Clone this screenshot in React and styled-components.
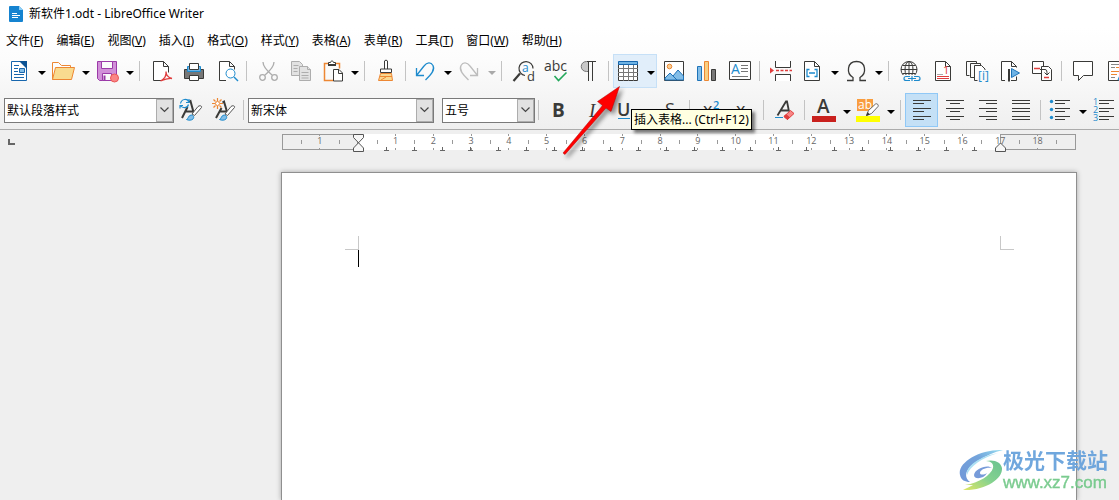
import React from "react";
import styled, { createGlobalStyle, css } from "styled-components";

const INK = "#3a3a38";
const BLUE = "#1e8bcd";
const ORANGE = "#ed8733";
const RED = "#e03e3e";
const GREY = "#adadad";

const GlobalStyle = createGlobalStyle`
  * {
    box-sizing: border-box;
  }
  body {
    margin: 0;
    background: #efefef;
    color: #000;
    font-family: "Noto Sans", "Noto Sans CJK SC", sans-serif;
    font-size: 12px;
  }
`;

/* ---------- icons, all on a 24px grid ---------- */

const Glyph = ({ x, y, size, color = INK, children, ...rest }) => (
  <text
    x={x}
    y={y}
    fontSize={size}
    fill={color}
    stroke="none"
    fontFamily="Open Sans, sans-serif"
    {...rest}
  >
    {children}
  </text>
);

const Brush = () => (
  <>
    <path d="M22.5 9.5l-7 8-2.5-1.5 6-7.5c1.500-1.500 4.500-.5 3.500 1z" fill="#fff" stroke="#555" />
    <path d="M7.500 21.500c2-.5 1.500-4 4.500-4.500 2.500 0 3.500 2.500 2 4-1.500 1.500-4.500 1.500-6.500.5z" fill="#83bee8" stroke={BLUE} />
  </>
);

const lines = (rows, x1, x2) => rows.map((y) => <path key={y} d={`M${x1} ${y}H${x2}`} />);

const ICONS = {
  newDoc: (
    <g stroke="#1766ad">
      <path d="M4.500 2.500h10l5 5v14h-15z" fill="#fff" />
      <path d="M12 2h8v8z" fill="#0b5394" stroke="none" />
      <path d="M7 6.500h5M7 9.500h4M7 12.500h4M7 15.500h10M7 18.500h10" />
      <path d="M12.500 9.500h5v4h-5z" fill="#83bee8" />
    </g>
  ),
  open: (
    <g stroke={ORANGE}>
      <path d="M1.500 20.500v-17h6l3 3h9v3" fill="#fdfdfd" />
      <path d="M4.500 8.500h19l-3 12h-19z" fill="#f9db8f" />
    </g>
  ),
  save: (
    <g stroke="#9b3aa8">
      <path d="M2.500 2.500h19v19h-17l-2-2z" fill="#d190d8" />
      <path d="M6.500 2.500h11v7h-11z" fill="#fafafa" />
      <path d="M7.500 21.500v-7h9v7z" fill="#fafafa" />
      <path d="M9.500 16.500v5" strokeWidth="2" />
      <circle cx="19.500" cy="19" r="4" fill="#fa8585" stroke="#ea5757" />
    </g>
  ),
  pdf: (
    <>
      <path d="M12 21.500h-7.500v-19h10l5 5v6M14.500 2.500v5h5" fill="#fff" />
      <path d="M11.500 22c4-2 6-5.500 5.500-9.500 0 3.500 2 6 6 7-4-.5-7 .5-11.500 2.500z" stroke={RED} strokeWidth="1.300" />
    </>
  ),
  print: (
    <>
      <path d="M2.500 10.500h19v9h-19z" fill="#777" />
      <path d="M5.500 7.500h13v5h-13z" fill="#6fb3e4" stroke={BLUE} />
      <path d="M7.500 10.500v-6h9v6z" fill="#fff" />
      <path d="M7.500 16.500h9v5h-9z" fill="#fff" />
    </>
  ),
  preview: (
    <>
      <path d="M11 21.500h-6.500v-19h10l5 5v3M14.500 2.500v5h5" fill="#fff" />
      <circle cx="15.500" cy="14.500" r="4.500" stroke={BLUE} fill="#fff" />
      <path d="M19 18l4 4" stroke={BLUE} strokeWidth="1.400" />
    </>
  ),
  cut: (
    <g stroke={GREY} strokeWidth="1.300">
      <path d="M7 3c0 4 2 7 9 13M18 3c0 4-2 7-9 13" />
      <circle cx="6.500" cy="18.500" r="2.800" />
      <circle cx="18.500" cy="18.500" r="2.800" />
    </g>
  ),
  copy: (
    <g stroke={GREY} fill="#e2e2e2">
      <path d="M2.500 2.500h8l3 3v11h-11z" />
      <path d="M10.500 7.500h8l3 3v11h-11z" />
      <path d="M18.500 7.500v3h3M4.500 6.500h5M4.500 9.500h4M4.500 12.500h4M12.500 13.500h7M12.500 16.500h7M12.500 19h7" />
    </g>
  ),
  paste: (
    <>
      <path d="M8 4.500h-3.500v17h9M16 4.500h3.500v5" stroke={ORANGE} strokeWidth="1.500" />
      <path d="M8.500 6.500v-3h2c0-2 3-2 3 0h2v3z" fill="#fff" />
      <path d="M8 6h8" strokeWidth="2" />
      <path d="M13.500 10.500h5.500l3.500 3.500v8h-9zM18.500 10.500v4h4" fill="#fff" />
    </>
  ),
  clone: (
    <>
      <path d="M10.500 10v-8c0-1 3-1 3 0v8M6.500 13.500v-3.500h11v3.500z" fill="#fff" />
      <path d="M6.500 14.500h11l1 7h-14z" fill="#fad890" stroke={ORANGE} />
      <path d="M6 17.500h12M7 21l5-3" stroke={ORANGE} />
    </>
  ),
  undo: <path d="M3.500 9v7.500h7.500M3.500 16.500l7.500-9.500c3-4 7-4 9-.5 2 4-.5 8-7.500 14.500" stroke={BLUE} strokeWidth="1.300" />,
  redo: <path d="M20.500 9v7.500h-7.500M20.500 16.500l-7.500-9.500c-3-4-7-4-9-.5-2 4 .5 8 7.500 14.500" stroke="#bdbdbd" strokeWidth="1.300" />,
  find: (
    <>
      <path d="M14 16.500a7 7 0 1 1 8-7" strokeWidth="1.200" />
      <path d="M9 14.500l-6.500 7.500" strokeWidth="2.200" />
      <Glyph x="11" y="13" size="12" color={BLUE}>a</Glyph>
      <Glyph x="16" y="22" size="13">d</Glyph>
    </>
  ),
  spelling: (
    <>
      <Glyph x="0" y="12" size="14">abc</Glyph>
      <path d="M10.500 17l4 4.500 8-8" stroke="#23a85b" strokeWidth="1.600" />
    </>
  ),
  pilcrow: (
    <>
      <path d="M11.500 2.500h-2c-7 0-7 10 0 10h2z" fill="#c9c9c9" stroke="#777" />
      <path d="M19 2.500h-9M11.500 2.500v19.500M15.500 2.500v19.500" />
    </>
  ),
  table: (
    <>
      <path d="M2.500 5.500h19v16h-19z" fill="#fff" />
      <path d="M2 9.500h20M2 13.500h20M2 17.500h20M7.500 6v16M12.500 6v16M17.500 6v16" stroke="#777" />
      <path d="M2.500 2.500h19v3h-19z" fill="#6fb3e4" stroke="#1766ad" />
    </>
  ),
  image: (
    <>
      <path d="M2.500 2.500h19v19h-19z" fill="#fff" />
      <circle cx="7.500" cy="7.500" r="2.300" fill="#f9cf93" stroke={ORANGE} />
      <path d="M3 21v-2l5-5 3 3 5-6 5.500 6v4z" fill="#83bee8" stroke="#1e73b8" />
      <path d="M11 17l4 4" stroke="#1e73b8" />
    </>
  ),
  chart: (
    <>
      <path d="M2.500 7.500h4v14h-4z" fill="#83bee8" stroke="#1e73b8" />
      <path d="M9.500 2.500h4v19h-4z" fill="#f9cf83" stroke={ORANGE} />
      <path d="M16.500 10.500h4v11h-4z" fill="#787878" />
    </>
  ),
  textBox: (
    <>
      <path d="M1.500 2.500h21v18h-21z" fill="#fff" />
      <path d="M13 6.500h7M13 9.500h7M13 12.500h7M4 17.500h16" stroke="#777" />
      <Glyph x="3" y="15" size="14" color={BLUE}>A</Glyph>
    </>
  ),
  pageBreak: (
    <>
      <path d="M6.500 2v6.500h15v-6.500M6.500 22v-6.500h15v6.500" fill="#fff" />
      <path d="M7 11.500h16" stroke={RED} strokeWidth="1.500" strokeDasharray="3 1.500" />
      <path d="M1 8.500l4 3-4 3z" fill={RED} stroke="none" />
    </>
  ),
  field: (
    <>
      <path d="M4.500 2.500h10l5 5v14h-15zM14.500 2.500v5h5" fill="#fff" />
      <path d="M9.500 10.500h-2.500v7h2.500M14.500 10.500h2.500v7h-2.500M9 14h6" stroke={BLUE} strokeWidth="1.300" />
    </>
  ),
  omega: <path d="M3 21.500h6v-3c-7-4-6-16 3.500-16s10.500 12 3.500 16v3h6" strokeWidth="1.300" />,
  link: (
    <>
      <circle cx="11" cy="10.500" r="8" />
      <ellipse cx="11" cy="10.500" rx="4" ry="8" />
      <path d="M11 2.500v15M3 10.500h16M4.500 6.500h13M4.500 14.500h13" />
      <path d="M5 16h18v7h-18z" fill="#f7f7f7" stroke="none" />
      <path d="M12 17.500h-4a2 2 0 0 0 0 4h4M16 17.500h4a2 2 0 0 1 0 4h-4M10 19.500h8M14 17v5" stroke={BLUE} strokeWidth="1.200" />
    </>
  ),
  footnote: (
    <>
      <path d="M4.500 2.500h10l5 5v14h-15zM14.500 2.500v5h5" fill="#fff" />
      <path d="M6 15.500h6" stroke="#aaa" />
      <path d="M6 17.500h12M6 19.500h12" stroke={RED} />
      <Glyph x="12" y="15" size="11" color={RED}>1</Glyph>
    </>
  ),
  endnote: (
    <>
      <path d="M2.500 16.500v-14h10v2M2.500 16.500h3" />
      <path d="M6.500 18.500v-14h10v2M6.500 18.500h4" />
      <path d="M10.500 21.500v-15h7l3.500 3.500v1M10.500 21.500h3" fill="#fff" />
      <Glyph x="14" y="21" size="12" color={BLUE}>[i]</Glyph>
    </>
  ),
  bookmark: (
    <>
      <path d="M8 21.500h-3.500v-19h10l5 5v1M14.500 2.500v5h5M14 21.500h5.500v-4" fill="#fff" />
      <path d="M12 10v12.500" strokeWidth="2" />
      <path d="M14.500 9.500l8 4.500-8 4.500z" fill="#6fb3e4" stroke="#1e73b8" />
    </>
  ),
  crossRef: (
    <>
      <path d="M2.500 2.500h11v12h-11z" fill="#fff" />
      <path d="M11.500 7.500h7l3 3v11h-10z" fill="#fff" />
      <path d="M4 9.500h6M14 18.500h5" stroke={RED} strokeWidth="1.500" />
      <path d="M10 10.500h5c2 0 2 2 2 5M14.500 13.500l2.500 2.500 2.500-2.500" />
    </>
  ),
  comment: <path d="M2.500 2.500h19v14h-9l-5 5v-5h-5z" fill="#fff" />,
  track: (
    <>
      <path d="M4.500 2.500h18v19h-18z" fill="#fff" />
      <path d="M7 5.500h8M7 8.500h4M7 18.500h4" stroke="#888" />
      <path d="M12 8.500h8M7 12.500h10M7 15.500h6" stroke={ORANGE} />
      <path d="M14 21l2-5 6-6v9z" fill="#83bee8" stroke={BLUE} />
    </>
  ),
  styleUpdate: (
    <>
      <path d="M3 20l5.500-11M10 4l1.500-1 3.500 13M6 13.500h9" strokeWidth="2" />
      <path d="M1.500 5.500c1-5 7-5 8-2M10 1v3.500h-3M9.500 6.500c-1 4-6 4-8 1M1 10.500v-3h3" stroke={BLUE} strokeWidth="1.200" />
      <Brush />
    </>
  ),
  styleNew: (
    <>
      <path d="M4 20l5.500-10M10.500 4.500l1.500-1 3.500 12M7 13.500h8" strokeWidth="2" />
      <path d="M5.500 0v3M5.500 8v3M0 5.500h3M8 5.500h3M1.500 1.500l2 2M9.500 1.500l-2 2M1.500 9.500l2-2M9.500 9.500l-2-2" stroke={ORANGE} strokeWidth="1.200" />
      <circle cx="5.500" cy="5.500" r="2" fill="#fff" stroke={ORANGE} />
      <Brush />
    </>
  ),
  bold: <Glyph x="4" y="19" size="19" fontWeight="700">B</Glyph>,
  italic: <Glyph x="8" y="19" size="19" fontStyle="italic" style={{ fontFamily: "Liberation Serif, serif" }}>I</Glyph>,
  underline: (
    <>
      <Glyph x="5" y="18" size="18" fontWeight="600">U</Glyph>
      <path d="M6 20.500h12" stroke={BLUE} />
    </>
  ),
  strike: <Glyph x="7" y="18" size="18">S</Glyph>,
  superscript: (
    <>
      <Glyph x="4" y="18" size="18">x</Glyph>
      <Glyph x="14" y="11" size="11" color={BLUE} fontWeight="600">2</Glyph>
    </>
  ),
  subscript: (
    <>
      <Glyph x="4" y="18" size="18">x</Glyph>
      <Glyph x="14" y="22" size="10" color={BLUE}>2</Glyph>
    </>
  ),
  clearFormat: (
    <>
      <path d="M4.500 17.500l8.500-14h1l2 10M7.500 12.500h8" strokeWidth="1.800" />
      <path d="M2 19.500h8" stroke={BLUE} />
      <path d="M11 18.500l6.500-6 3.500 3-6.500 6z" fill="#f78585" stroke={RED} />
      <path d="M11 18.500l2-2 3.500 3-2 2z" fill={RED} stroke={RED} />
    </>
  ),
  fontColor: (
    <>
      <Glyph x="5" y="15" size="19" fontWeight="600">A</Glyph>
      <path d="M0 18h24v6h-24z" fill="#c9211e" stroke="none" />
    </>
  ),
  highlight: (
    <>
      <path d="M1 1h16v12h-16z" fill="#f99d3e" stroke="none" />
      <Glyph x="2" y="11" size="12" color="#fff">ab</Glyph>
      <path d="M0 18h24v6h-24z" fill="#ffff00" stroke="none" />
      <path d="M10.500 17.500l2-5 7-6.500c1.500-1 3.500 1 2.500 2.500l-6.500 7z" fill="#fff" stroke="#666" />
      <path d="M10 18l1.500-4 2.500 2.500z" fill={INK} stroke="none" />
    </>
  ),
  alignLeft: (
    <>
      {lines([2.5, 10.5, 18.5], 3, 21)}
      {lines([5.5, 13.5, 21.5], 3, 14)}
    </>
  ),
  alignCenter: (
    <>
      {lines([2.5, 10.5, 18.5], 3, 21)}
      {lines([5.5, 13.5, 21.5], 7, 17)}
    </>
  ),
  alignRight: (
    <>
      {lines([2.5, 10.5, 18.5], 3, 21)}
      {lines([5.5, 13.5, 21.5], 10, 21)}
    </>
  ),
  justify: lines([2.5, 5.5, 10.5, 13.5, 18.5, 21.5], 3, 21),
  bullets: (
    <>
      {[3.5, 11.5, 19.5].map((y) => (
        <circle key={y} cx="3.500" cy={y} r="1.700" fill={BLUE} stroke="none" />
      ))}
      {lines([2.5, 10.5, 18.5], 7, 22)}
      {lines([5.5, 13.5, 21.5], 7, 17)}
    </>
  ),
  numbering: (
    <>
      {[1, 2, 3].map((n) => (
        <Glyph key={n} x="1" y={n * 8 - 1} size="9" color={BLUE}>{n}</Glyph>
      ))}
      {lines([2.5, 10.5, 18.5], 7, 22)}
      {lines([5.5, 13.5, 21.5], 7, 17)}
    </>
  )
};

/* ---------- data ---------- */

const MENUS = [
  ["文件", "F"],
  ["编辑", "E"],
  ["视图", "V"],
  ["插入", "I"],
  ["格式", "O"],
  ["样式", "Y"],
  ["表格", "A"],
  ["表单", "R"],
  ["工具", "T"],
  ["窗口", "W"],
  ["帮助", "H"]
];

// "|" is a separator, a trailing "+" means the button has a drop-down arrow
const STANDARD = [
  "newDoc+", "open+", "save+", "|",
  "pdf", "print", "preview", "|",
  "cut", "copy", "paste+", "|",
  "clone", "|",
  "undo+", "redo+", "|",
  "find", "spelling", "pilcrow", "|",
  "table+", "image", "chart", "textBox", "|",
  "pageBreak", "field+", "omega+", "|",
  "link", "footnote", "endnote", "bookmark", "crossRef", "|",
  "comment", "track"
];

const FORMATTING = [
  "|", "bold", "italic", "underline+", "strike",
  "|", "superscript", "subscript",
  "|", "clearFormat",
  "|", "fontColor+", "highlight+",
  "|", "alignLeft", "alignCenter", "alignRight", "justify",
  "|", "bullets+", "numbering+"
];

const RULER_LABELS = ["1", "", ...Array.from({ length: 18 }, (_, i) => String(i + 1))];
const TAB_STOPS = Array.from({ length: 22 }, (_, i) => i);

/* ---------- components ---------- */

function ToolIcon({ name }) {
  return (
    <Icon viewBox="0 0 24 24" aria-hidden="true">
      {ICONS[name]}
    </Icon>
  );
}

function Tool({ spec, children }) {
  if (spec === "|") return <Separator />;
  const split = spec.endsWith("+");
  const name = spec.replace("+", "");
  return (
    <ToolSlot>
      <ToolButton
        type="button"
        aria-label={name}
        $split={split}
        $hover={name === "table"}
        $active={name === "alignLeft"}
      >
        <ToolIcon name={name} />
        {split && <Caret $muted={name === "redo"} />}
      </ToolButton>
      {children}
    </ToolSlot>
  );
}

function Combo({ label, value, width }) {
  return (
    <ComboBox $width={width}>
      <ComboSelect aria-label={label} defaultValue={value}>
        <option>{value}</option>
      </ComboSelect>
      <ComboArrow>
        <svg width="9" height="6" viewBox="0 0 9 6" fill="none" stroke="#444">
          <path d="M.5 .5l4 4 4-4" strokeWidth="1.200" />
        </svg>
      </ComboArrow>
    </ComboBox>
  );
}

function Pointer() {
  return (
    <PointerArrow width="60" height="72" viewBox="0 0 60 72" aria-hidden="true">
      <path d="M1 69L40.500 21.500l-5-4L57.500 2.500 49 27.500l-5-3.500L3 70.500z" fill="#f00" stroke="#b00000" strokeWidth=".5" />
    </PointerArrow>
  );
}

function Ruler() {
  return (
    <RulerBox>
      <RulerBands>
        <span />
        <span />
        <span />
      </RulerBands>
      <RulerScale>
        {RULER_LABELS.map((label, i) => (
          <RulerMark key={i} $blank={!label}>
            {label}
          </RulerMark>
        ))}
      </RulerScale>
      <TabStops>
        {TAB_STOPS.map((n) => (
          <TabStop key={n} />
        ))}
      </TabStops>
      <RulerBands>
        <Indent width="11" height="18" viewBox="0 0 11 18">
          <path d="M.5 .5h10v3L.5 14v3.500h10V14L.5 3.500z" fill="#f7f7f7" stroke="#555" />
        </Indent>
        <Indent width="11" height="18" viewBox="0 0 11 18">
          <path d="M.5 17.500v-3.500l5-5 5 5v3.500z" fill="#f7f7f7" stroke="#555" />
        </Indent>
      </RulerBands>
    </RulerBox>
  );
}

function Watermark() {
  return (
    <Mark>
      <svg width="45" height="44" viewBox="0 0 45 44" aria-hidden="true">
        <defs>
          <linearGradient id="swoosh" x1="0" y1="1" x2="1" y2="0">
            <stop offset="0" stopColor="#e0e65a" />
            <stop offset=".5" stopColor="#7fd08a" />
            <stop offset="1" stopColor="#62c08c" />
          </linearGradient>
          <linearGradient id="wave" x1="0" y1="1" x2="1" y2="0">
            <stop offset="0" stopColor="#6a92d6" />
            <stop offset=".6" stopColor="#6c9fda" />
            <stop offset="1" stopColor="#8fdcf0" />
          </linearGradient>
        </defs>
        <path d="M44 2C20 1-2 15 1 27c1 5 5 7 10 7C3 28 8 19 20 12 27 8 35 4 44 2z" fill="url(#wave)" />
        <path d="M39 5C22 8 6 18 8 27 11 18 23 10 39 5z" fill="#a9dff3" />
        <path d="M27 13c8-2 15 1 16 7 1 11-17 23-39 22 4-2 8-4 10-5l-8 0c14-2 26-10 28-17 1-4-2-7-7-7z" fill="url(#swoosh)" />
        <path d="M33 20c-4-4-17 0-18 7 0 5 10 4 13-2-3 2-7 2-7 0 0-3 6-6 12-5z" fill="#7096d8" />
      </svg>
      <MarkText>
        <strong>极光下载站</strong>
        <span>www.xz7.com</span>
      </MarkText>
    </Mark>
  );
}

function App() {
  return (
    <Window>
      <GlobalStyle />
      <Header>
        <TitleBar>
          <svg width="14" height="16" viewBox="0 0 14 16" aria-hidden="true">
            <path d="M1 0h9l4 4v11a1 1 0 0 1-1 1H1a1 1 0 0 1-1-1V1a1 1 0 0 1 1-1z" fill="#1583d0" />
            <path d="M10 0l4 4h-4z" fill="#8ed0f8" />
            <path d="M3 7.500h5M3 9.500h8M3 11.500h6" stroke="#fff" />
          </svg>
          <Title>新软件1.odt - LibreOffice Writer</Title>
        </TitleBar>
        <MenuBar>
          {MENUS.map(([label, key]) => (
            <MenuItem key={key} type="button">
              {label}(<u>{key}</u>)
            </MenuItem>
          ))}
        </MenuBar>
        <Toolbar>
          {STANDARD.map((spec, i) => (
            <Tool key={i} spec={spec}>
              {spec === "table+" && (
                <>
                  <Tooltip role="tooltip">插入表格... (Ctrl+F12)</Tooltip>
                  <Pointer />
                </>
              )}
            </Tool>
          ))}
        </Toolbar>
        <Toolbar>
          <Combo label="段落样式" value="默认段落样式" width={170} />
          <Tool spec="styleUpdate" />
          <Tool spec="styleNew" />
          <Separator />
          <Combo label="字体名称" value="新宋体" width={186} />
          <ComboGap />
          <Combo label="字号" value="五号" width={93} />
          {FORMATTING.map((spec, i) => (
            <Tool key={i} spec={spec} />
          ))}
        </Toolbar>
      </Header>
      <Workspace>
        <TabType />
        <Sheet>
          <Ruler />
          <Page>
            <Corner $side="left" />
            <Corner $side="right" />
            <TextCursor />
          </Page>
        </Sheet>
      </Workspace>
      <Watermark />
    </Window>
  );
}

const Window = styled.div`
  position: relative;
  display: flex;
  flex-direction: column;
  min-height: 100vh;
  overflow: hidden;
`;

const Header = styled.header`
  position: relative;
  z-index: 1;
  padding-bottom: 2px;
  border-bottom: 1px solid #ababab;
  background: linear-gradient(#fff 28px, #fcfcfc 60px, #efefef);
`;

const TitleBar = styled.div`
  display: flex;
  align-items: center;
  gap: 6px;
  height: 28px;
  padding: 0 9px;
`;

const Title = styled.h1`
  margin: 0;
  font-size: 12px;
  font-weight: 400;
  line-height: 16px;
  white-space: nowrap;
`;

const MenuBar = styled.nav`
  display: flex;
  gap: 13px;
  height: 26px;
  padding: 0 6px;
`;

const MenuItem = styled.button`
  padding: 0;
  border: 0;
  background: none;
  color: #000;
  font: inherit;
  line-height: 16px;
  white-space: nowrap;
`;

const Toolbar = styled.div`
  display: flex;
  align-items: center;
  height: 34px;
  padding-left: 4px;

  & + & {
    margin-top: 5px;
  }
`;

const ToolSlot = styled.div`
  position: relative;
  flex: none;
`;

const ToolButton = styled.button`
  display: flex;
  align-items: center;
  gap: 7px;
  width: ${({ $split }) => ($split ? 44 : 33)}px;
  height: 34px;
  padding: 0 0 0 ${({ $split }) => ($split ? 3 : 5)}px;
  border: 0;
  background: none;
  ${({ $hover }) =>
    $hover &&
    css`
      background: #e1eefa;
      box-shadow: inset 0 0 0 1px #c6e0f7;
    `}
  ${({ $active }) =>
    $active &&
    css`
      background: #c4e0f6;
      box-shadow: inset 0 0 0 1px #90c8f6;
    `}
`;

const Icon = styled.svg`
  flex: none;
  width: 24px;
  height: 24px;
  overflow: visible;
  fill: none;
  stroke: ${INK};
`;

const Caret = styled.span`
  flex: none;
  margin-top: 4px;
  border: 4px solid transparent;
  border-top-color: ${({ $muted }) => ($muted ? "#a9a9a9" : "#000")};
  border-bottom: 0;
`;

const Separator = styled.span`
  flex: none;
  width: 8px;
  height: 20px;
  background: linear-gradient(#c3c3c3, #c3c3c3) 3px 0 / 1px 100% no-repeat;
`;

const ComboGap = styled.span`
  flex: none;
  width: 8px;
`;

const ComboBox = styled.div`
  display: flex;
  flex: none;
  width: ${({ $width }) => $width}px;
  height: 25px;
  border: 1px solid #7a7a7a;
  background: #fff;
`;

const ComboSelect = styled.select`
  flex: 1;
  min-width: 0;
  padding: 0 2px;
  border: 0;
  appearance: none;
  background: none;
  color: #000;
  font: inherit;
`;

const ComboArrow = styled.span`
  display: flex;
  align-items: center;
  justify-content: center;
  width: 17px;
  border: 1px solid #adadad;
  background: #e1e1e1;
  pointer-events: none;
`;

const Tooltip = styled.div`
  position: absolute;
  z-index: 1;
  top: 55px;
  left: 18px;
  padding: 0 2px;
  border: 1px solid #000;
  background: #ffffe1;
  box-shadow: 3px 3px 3px rgba(0, 0, 0, 0.5);
  line-height: 19px;
  white-space: nowrap;
`;

const PointerArrow = styled.svg`
  position: absolute;
  top: 30px;
  left: -51px;
  filter: drop-shadow(3px 3px 2px rgba(0, 0, 0, 0.45));
  pointer-events: none;
`;

const Workspace = styled.main`
  flex: 1;
  display: grid;
  grid-template-columns: 281px minmax(0, 796px);
`;

const TabType = styled.span`
  width: 7px;
  height: 6px;
  margin: 9px 0 0 8px;
  border: solid #666;
  border-width: 0 0 2px 2px;
`;

const Sheet = styled.div`
  display: flex;
  flex-direction: column;
`;

// the layers share one grid cell so that they stack without offsets
const RulerBox = styled.div`
  display: grid;
  height: 18px;
  margin: 4px 1px 20px;

  & > * {
    grid-area: 1 / 1;
  }
`;

const RulerBands = styled.div`
  display: grid;
  grid-template-columns: 2fr 17fr 2fr;
  height: 18px;

  & > span {
    height: 16px;
    border: 1px solid #999;
  }
  & > span:nth-child(2) {
    border: 0;
    background: #fff;
  }
`;

const RulerScale = styled.div`
  display: grid;
  grid-template-columns: repeat(20, 1fr);
  height: 16px;
  padding: 0 19px;
  color: #666;
  font-family: "Open Sans", sans-serif;
  font-size: 9px;
  line-height: 14px;
  text-align: center;
`;

const RulerMark = styled.span`
  background:
    linear-gradient(#999, #999) 0 6px / 1px 4px no-repeat,
    linear-gradient(#999, #999) 50% 0 / ${({ $blank }) => ($blank ? 0 : 1)}px 2px no-repeat,
    linear-gradient(#999, #999) 50% 100% / 1px 2px no-repeat;

  &:last-child {
    border-right: 1px solid;
    border-image: linear-gradient(transparent 6px, #999 6px 10px, transparent 10px) 1;
  }
`;

const TabStops = styled.div`
  display: grid;
  grid-template-columns: repeat(22, 28px);
  align-items: end;
  height: 17px;
  padding-left: 90px;
`;

const TabStop = styled.span`
  width: 28px;
  height: 4px;
  background:
    linear-gradient(#666, #666) 12px 100% / 5px 1px no-repeat,
    linear-gradient(#666, #666) 14px 0 / 1px 100% no-repeat;
`;

const Indent = styled.svg`
  justify-self: end;
  margin-right: -6px;
`;

const Page = styled.article`
  flex: 1;
  display: grid;
  grid-template-columns: auto auto;
  grid-template-rows: 14px 17px;
  justify-content: space-between;
  min-height: 328px;
  padding: 63px 62px 0 63px;
  border: 1px solid #8f8f8f;
  border-bottom: 0;
  background: #fff;
  box-shadow: 0 0 5px rgba(0, 0, 0, 0.3);
`;

const Corner = styled.span`
  width: 14px;
  height: 14px;
  border-bottom: 1px solid #c8c8c8;
  ${({ $side }) => ($side === "left" ? "border-right" : "border-left")}: 1px solid #c8c8c8;
`;

const TextCursor = styled.span`
  justify-self: end;
  width: 1px;
  background: #000;
`;

const Mark = styled.aside`
  position: absolute;
  right: 11px;
  bottom: 8px;
  display: flex;
  opacity: 0.95;
`;

const MarkText = styled.div`
  display: flex;
  flex-direction: column;
  margin-left: -1px;
  color: #69a3dc;
  font-family: "Liberation Sans", "Noto Sans CJK SC", sans-serif;

  strong {
    font-size: 21px;
    line-height: 26px;
  }
  span {
    color: #74c98a;
    font-size: 17px;
    line-height: 18px;
    -webkit-text-stroke: 0.4px #74c98a;
  }
`;

export default App;
